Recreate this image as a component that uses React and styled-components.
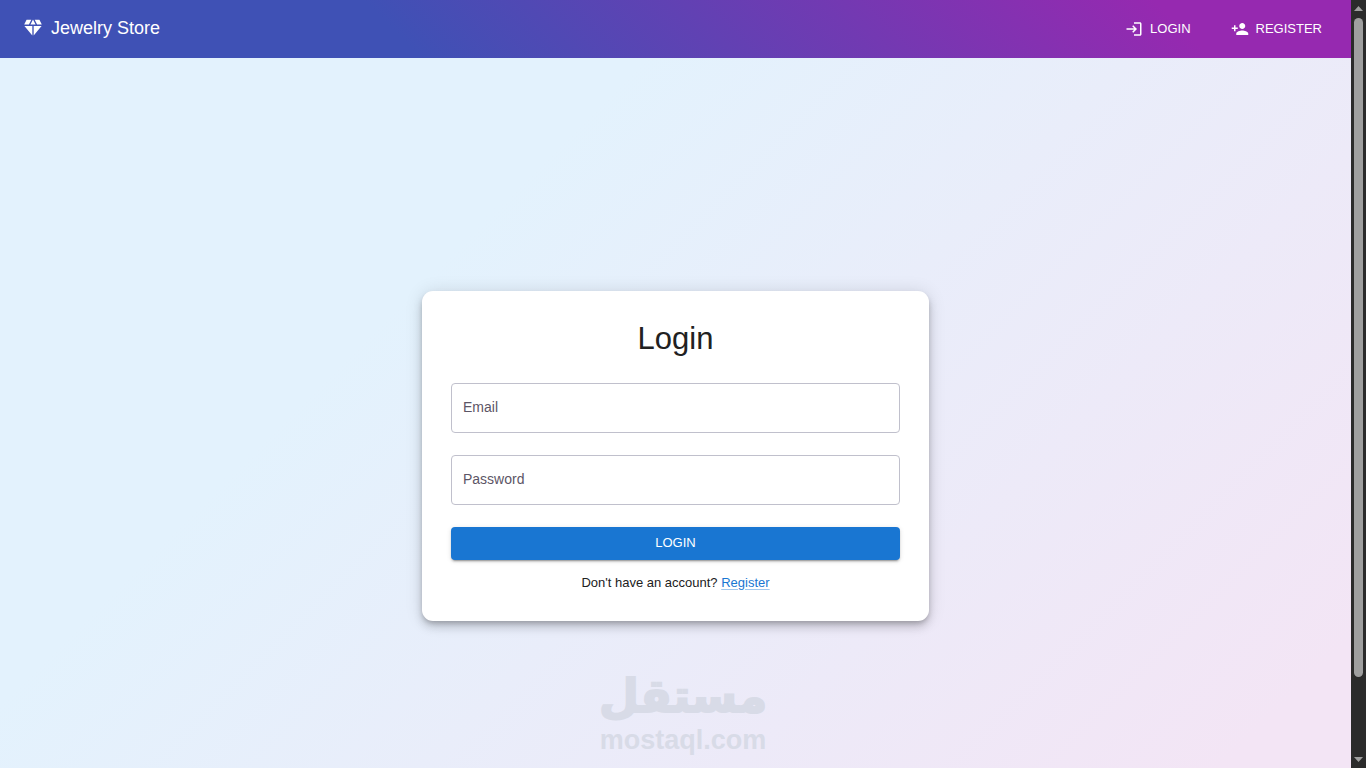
import React from "react";
import styled, { createGlobalStyle } from "styled-components";
import { MdDiamond, MdLogin, MdPersonAdd } from "react-icons/md";

function Header() {
  return (
    <Bar>
      <Brand href="#home">
        <MdDiamond size={22} />
        Jewelry Store
      </Brand>
      <Nav>
        <NavLink href="#login">
          <MdLogin size={18} />
          LOGIN
        </NavLink>
        <NavLink href="#register">
          <MdPersonAdd size={18} />
          REGISTER
        </NavLink>
      </Nav>
    </Bar>
  );
}

function TextField({ id, label, type }) {
  return (
    <Field>
      <Input id={id} type={type} placeholder=" " />
      <Label htmlFor={id}>{label}</Label>
    </Field>
  );
}

function LoginForm() {
  return (
    <Card onSubmit={(e) => e.preventDefault()}>
      <Title>Login</Title>
      <Fields>
        <TextField id="email" label="Email" type="email" />
        <TextField id="password" label="Password" type="password" />
        <Submit type="submit">LOGIN</Submit>
      </Fields>
      <Hint>
        Don't have an account? <a href="#register">Register</a>
      </Hint>
    </Card>
  );
}

function App() {
  return (
    <Screen>
      <GlobalStyle />
      <Page>
        <Header />
        <Main>
          <LoginForm />
        </Main>
      </Page>
      <Scrollbar aria-hidden="true">
        <Arrow viewBox="0 0 9 5">
          <path d="M0 5L4.5 0L9 5z" />
        </Arrow>
        <Track>
          <Thumb />
        </Track>
        <Arrow viewBox="0 0 9 5">
          <path d="M0 0L4.5 5L9 0z" />
        </Arrow>
      </Scrollbar>
      <Watermark>
        <WatermarkName lang="ar" dir="rtl">
          مستقل
        </WatermarkName>
        <WatermarkSite>mostaql.com</WatermarkSite>
      </Watermark>
    </Screen>
  );
}

export default App;

const GlobalStyle = createGlobalStyle`
  * {
    box-sizing: border-box;
  }

  body {
    margin: 0;
    font-family: "Liberation Sans", Arial, sans-serif;
    color: #212121;
  }

  input, button {
    font-family: inherit;
  }
`;

const Screen = styled.div`
  position: relative;
  display: flex;
  height: 100vh;
  overflow: hidden;
`;

const Page = styled.div`
  flex: 1;
  min-width: 0;
`;

const Bar = styled.header`
  display: flex;
  align-items: center;
  justify-content: space-between;
  height: 58px;
  padding: 0 22px;
  background: linear-gradient(45deg, #3f51b5 30%, #9629b0 86%);
`;

const Brand = styled.a`
  display: flex;
  align-items: center;
  gap: 7px;
  padding-bottom: 2px;
  color: #fff;
  font-size: 18px;
  line-height: 28px;
  text-decoration: none;
`;

const Nav = styled.nav`
  display: flex;
  gap: 26px;
`;

const NavLink = styled.a`
  display: flex;
  align-items: center;
  gap: 7px;
  padding: 6px 7px;
  color: #fff;
  font-size: 13px;
  line-height: 22px;
  text-decoration: none;
`;

const Main = styled.main`
  display: flex;
  align-items: center;
  justify-content: center;
  min-height: calc(100vh + 27px);
  background: linear-gradient(135deg, #e3f2fd 30%, #f3e5f5 90%);
`;

const Card = styled.form`
  width: 100%;
  max-width: 507px;
  padding: 29px;
  border-radius: 11px;
  background: #fff;
  box-shadow: 0 3px 5px -1px rgba(0, 0, 0, 0.2),
    0 6px 10px 0 rgba(0, 0, 0, 0.14), 0 1px 18px 0 rgba(0, 0, 0, 0.12);
`;

const Title = styled.h1`
  margin: 0 0 25px;
  font-size: 31px;
  font-weight: 400;
  line-height: 38px;
  text-align: center;
`;

const Fields = styled.div`
  display: flex;
  flex-direction: column;
  gap: 22px;
`;

const Field = styled.div`
  position: relative;
  display: flex;
`;

const Label = styled.label`
  position: absolute;
  top: 14px;
  left: 11px;
  padding: 0 1px;
  color: #5c5566;
  font-size: 14px;
  line-height: 20px;
  background: #fff;
  pointer-events: none;
`;

const Input = styled.input`
  width: 100%;
  height: 50px;
  padding: 0 12px;
  border: 1px solid #c0c0cc;
  border-radius: 4px;
  background: #fff;
  color: #212121;
  font-size: 14px;
  outline: none;

  &:focus {
    border-color: #1976d2;
  }

  &:focus + ${Label}, &:not(:placeholder-shown) + ${Label} {
    top: -10px;
    font-size: 11px;
  }
`;

const Submit = styled.button`
  height: 33px;
  padding: 0 14px 2px;
  border: none;
  border-radius: 4px;
  background: #1976d2;
  color: #fff;
  font-size: 13px;
  cursor: pointer;
  box-shadow: 0 3px 1px -2px rgba(0, 0, 0, 0.2),
    0 2px 2px 0 rgba(0, 0, 0, 0.14), 0 1px 5px 0 rgba(0, 0, 0, 0.12);
`;

const Hint = styled.p`
  margin: 14px 0 0;
  font-size: 13px;
  line-height: 18px;
  text-align: center;

  a {
    color: #1976d2;
    text-decoration-color: rgba(25, 118, 210, 0.4);
    text-underline-offset: 2px;
  }
`;

const Scrollbar = styled.div`
  display: flex;
  flex-direction: column;
  align-items: center;
  width: 15px;
  padding: 6px 0;
  background: #2b2b2b;
`;

const Arrow = styled.svg`
  width: 9px;
  height: 5px;
  fill: #9f9f9f;
`;

const Track = styled.div`
  flex: 1;
  padding: 7px 0;
`;

const Thumb = styled.div`
  width: 9px;
  height: 90%;
  border-radius: 5px;
  background: #9f9f9f;
`;

const Watermark = styled.div`
  position: absolute;
  bottom: 12px;
  left: 50%;
  display: flex;
  flex-direction: column;
  align-items: center;
  color: #d8dbe7;
  font-weight: 700;
  transform: translateX(-50%);
  pointer-events: none;
`;

const WatermarkName = styled.span`
  font-family: "DejaVu Sans", sans-serif;
  font-size: 46px;
  line-height: 56px;
  -webkit-text-stroke: 2px #d8dbe7;
`;

const WatermarkSite = styled.span`
  font-size: 27px;
  line-height: 32px;
`;
